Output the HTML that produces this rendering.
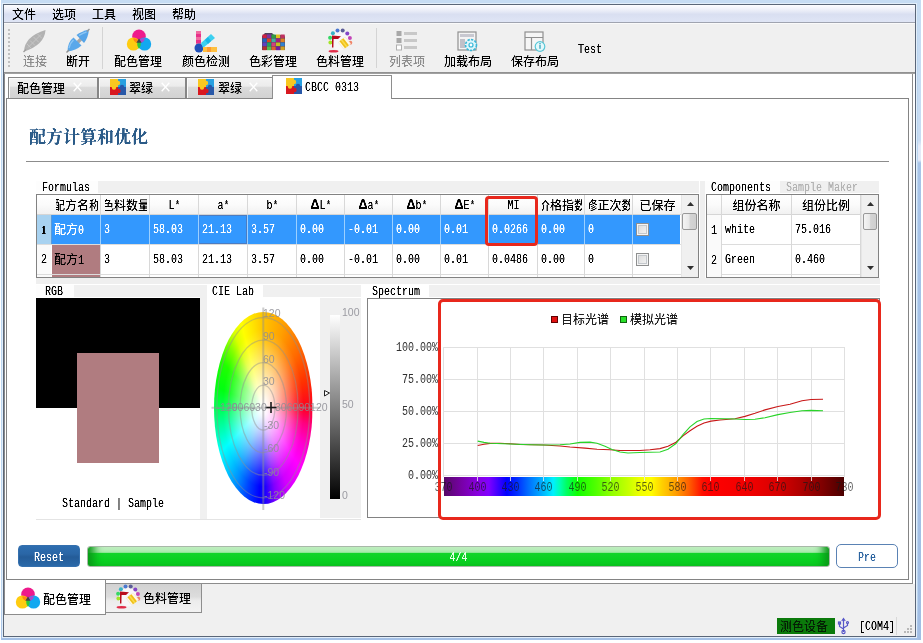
<!DOCTYPE html>
<html lang="zh-CN"><head><meta charset="utf-8"><title>配方计算和优化</title>
<style>
*{box-sizing:border-box;margin:0;padding:0}
html,body{width:923px;height:643px;overflow:hidden}
body{position:relative;background:#fff;font-family:"Liberation Sans","Noto Sans CJK SC",sans-serif;font-size:12px;line-height:12px;color:#000}
.a{position:absolute}
.t{position:absolute;white-space:nowrap;line-height:14px;height:14px;margin-top:1px;filter:url(#cr)}
.m{font-family:"Liberation Mono","Noto Sans CJK SC",monospace;transform:scaleX(.8333);transform-origin:0 50%}
.m.c{transform-origin:50% 50%}
span.m{display:inline-block;margin-right:-1.2px}
.c{text-align:center}
.r{text-align:right}
</style></head>
<body>
<svg width="0" height="0" style="position:absolute"><defs><filter id="cr" x="0" y="0" width="100%" height="100%" color-interpolation-filters="sRGB"><feComponentTransfer><feFuncA type="linear" slope="2" intercept="-0.3"/></feComponentTransfer></filter></defs></svg>
<div id="w" class="a" style="left:0;top:0;width:923px;height:643px;will-change:transform">
<div class="a" style="left:1px;top:0px;width:920px;height:640px;background:linear-gradient(#c6dcf3 0,#c8dcf3 140px,#e4eaf8 146px,#e4eaf8 160px,#a8c4e8 163px,#a2bee4 100%)"></div>
<div class="a" style="left:1px;top:0px;width:917px;height:640px;background:linear-gradient(#c6dcf3 0,#bcd6f0 60px,#bcd6f0 600px,#a4c0e6 100%)"></div>
<div class="a" style="left:1px;top:0px;width:916px;height:4px;background:#c6dcf3"></div>
<div class="a" style="left:2px;top:3px;width:915px;height:635px;background:#e2eefa"></div>
<div class="a" style="left:3px;top:4px;width:913px;height:633px;background:#fff;border:1px solid #5a6678"></div>
<div class="a" style="left:4px;top:5px;width:911px;height:17px;background:linear-gradient(#fdfdff 0%,#e9ecf7 35%,#d9dff1 55%,#dfe5f5 100%)"></div>
<div class="a" style="left:4px;top:22px;width:911px;height:1px;background:#a0a4b0"></div>
<div class="t" style="left:12px;top:7px;">文件</div>
<div class="t" style="left:52px;top:7px;">选项</div>
<div class="t" style="left:92px;top:7px;">工具</div>
<div class="t" style="left:132px;top:7px;">视图</div>
<div class="t" style="left:172px;top:7px;">帮助</div>
<div class="a" style="left:4px;top:23px;width:911px;height:49px;background:#f0f0f0;border-top:1px solid #fafafa"></div>
<div class="a" style="left:4px;top:72px;width:911px;height:2px;background:linear-gradient(#8a8a8a,#a8a8a8)"></div>
<div class="a" style="left:8px;top:27px;width:2px;height:42px;background:repeating-linear-gradient(#f0f0f0 0 2px,#c0c0c0 2px 4px)"></div>
<svg class="a" style="left:22px;top:28px" width="26" height="26" viewBox="0 0 26 26"><path d="M2 23.5 Q2.5 8.5 23.5 2 Q22.5 17 2 23.5Z" fill="#b2b2b2"/><path d="M6 19.5 L19 6.5 M5 16 L9 20 M8 12.5 L13 17.5 M11.5 9 L17 14.5 M15.5 6 L20 10.5" stroke="#c6c6c6" stroke-width="1" fill="none"/><path d="M1.5 24 L4 21.5" stroke="#a0a0a0" stroke-width="1.5"/></svg>
<svg class="a" style="left:65px;top:28px" width="26" height="26" viewBox="0 0 26 26"><path d="M8.5 18.5 L18 9" stroke="#a8a8a8" stroke-width="3.2"/><path d="M2.5 23.5 Q2.5 14 8.5 9.5 L16.5 17.5 Q11 22.5 2.5 23.5Z" fill="#5aa8ea"/><path d="M11.5 7 Q16 3.5 24 1.5 Q23 10.5 19 15 Z" fill="#55a4e8"/><path d="M4 20 Q5 15 8.5 12 M14 7.5 Q18 5 21.5 4" stroke="#8cc6f4" stroke-width="1.4" fill="none"/><path d="M1.5 24.5 L4 22" stroke="#909090" stroke-width="1.5"/><path d="M22 3.5 L24.5 1" stroke="#9a9a9a" stroke-width="1.5"/></svg>
<svg class="a" style="left:126px;top:29px" width="26" height="22" viewBox="0 0 26 22"><circle cx="13" cy="7.2" r="6.8" fill="#ee1a8c"/><circle cx="7.4" cy="15" r="6.6" fill="#ffcc10"/><circle cx="18.6" cy="15" r="6.6" fill="#12a8f0"/><path d="M13 11.6 A6.6 6.6 0 0 1 14 15 A6.6 6.6 0 0 1 13 18.4 A6.6 6.6 0 0 1 12 15 A6.6 6.6 0 0 1 13 11.6Z" fill="#2cc83c" stroke="#2cc83c" stroke-width="1.6"/><path d="M7 9.5 Q10 8.5 12.6 11 Q11 12.5 10.6 14 Q7.5 12.5 7 9.5Z" fill="#ff8a10"/><path d="M19 9.5 Q16 8.5 13.4 11 Q15 12.5 15.4 14 Q18.5 12.5 19 9.5Z" fill="#a84ad0"/><path d="M13 9.6 L15.6 13.8 L10.4 13.8Z" fill="#444"/></svg>
<svg class="a" style="left:194px;top:30px" width="24" height="23" viewBox="0 0 24 23"><rect x="2" y="1" width="5" height="16" fill="#f06aa0"/><rect x="2" y="4" width="5" height="3" fill="#e8308a"/><rect x="2" y="10" width="5" height="3" fill="#e8308a"/><circle cx="5" cy="18" r="4.5" fill="#2050b8"/><path d="M7 13 L17 4 L21 8 L9 18Z" fill="#3cd0f0"/><path d="M11 10 L14 7 L17 11 L14 14Z" fill="#18b8e8"/><rect x="9" y="17" width="14" height="5" fill="#ffc040"/><rect x="13" y="17" width="4" height="5" fill="#ff9a30"/></svg>
<svg class="a" style="left:261px;top:31px" width="25" height="21" viewBox="0 0 25 21"><path d="M1 5 L4 2 L11 2 L13 4 L23 4 L24 6 L24 19 L1 19Z" fill="#504060"/><rect x="1.5" y="3.5" width="4.2" height="3.7" fill="#d02040"/><rect x="6.0" y="3.5" width="4.2" height="3.7" fill="#8030a0"/><rect x="10.5" y="3.5" width="4.2" height="3.7" fill="#30a040"/><rect x="15.0" y="3.5" width="4.2" height="3.7" fill="#e0c020"/><rect x="19.5" y="3.5" width="4.2" height="3.7" fill="#c03060"/><rect x="1.5" y="7.5" width="4.2" height="3.7" fill="#2060c0"/><rect x="6.0" y="7.5" width="4.2" height="3.7" fill="#e04020"/><rect x="10.5" y="7.5" width="4.2" height="3.7" fill="#40b0a0"/><rect x="15.0" y="7.5" width="4.2" height="3.7" fill="#a02080"/><rect x="19.5" y="7.5" width="4.2" height="3.7" fill="#e08020"/><rect x="1.5" y="11.5" width="4.2" height="3.7" fill="#6040c0"/><rect x="6.0" y="11.5" width="4.2" height="3.7" fill="#20a060"/><rect x="10.5" y="11.5" width="4.2" height="3.7" fill="#d04080"/><rect x="15.0" y="11.5" width="4.2" height="3.7" fill="#c0c020"/><rect x="19.5" y="11.5" width="4.2" height="3.7" fill="#3080d0"/><rect x="1.5" y="15.5" width="4.2" height="3.7" fill="#b03030"/><rect x="6.0" y="15.5" width="4.2" height="3.7" fill="#50c050"/><rect x="10.5" y="15.5" width="4.2" height="3.7" fill="#e06030"/><rect x="15.0" y="15.5" width="4.2" height="3.7" fill="#7020a0"/><rect x="19.5" y="15.5" width="4.2" height="3.7" fill="#d0a020"/></svg>
<svg class="a" style="left:327px;top:28px" width="26" height="26" viewBox="0 0 26 26"><circle cx="13" cy="13" r="9.5" fill="#f8f6f8"/><circle cx="5.9" cy="5.2" r="2" fill="#38b4c4"/><circle cx="10.5" cy="2.4" r="2" fill="#4c78d0"/><circle cx="15.7" cy="2.6" r="2" fill="#5c5c98"/><circle cx="20.3" cy="5.5" r="2" fill="#8444c8"/><circle cx="22.9" cy="10" r="2" fill="#c444b8"/><circle cx="23.3" cy="14.8" r="2" fill="#f08468"/><circle cx="3.1" cy="9.7" r="2" fill="#34d864"/><circle cx="3.4" cy="14.4" r="2" fill="#a4e428"/><path d="M5 7.6 L14 8.2 L11 11 L6.6 11 L6.4 19.5 L5 19.5Z" fill="#b80c1c"/><g transform="rotate(-38 17.4 15)"><rect x="13" y="10.6" width="8.8" height="9" rx="1" fill="#fff8e4" stroke="#f0e8d8" stroke-width="0.8"/><rect x="14.6" y="10.6" width="5" height="9" fill="#f0c018"/><rect x="16.2" y="10.6" width="1.6" height="9" fill="#f8dc50"/></g><ellipse cx="6.5" cy="23.3" rx="5" ry="1.3" fill="#e02c48"/></svg>
<svg class="a" style="left:396px;top:30px" width="22" height="21" viewBox="0 0 22 21"><rect x="0.5" y="1" width="5" height="5" fill="#a8a8a8"/><rect x="0.5" y="8" width="5" height="5" fill="#a8a8a8"/><rect x="0.5" y="15" width="5" height="5" fill="#fff" stroke="#b0b0b0"/><rect x="8" y="2" width="13" height="3" fill="#c8c8c8"/><rect x="8" y="9" width="13" height="3" fill="#c8c8c8"/><rect x="8" y="16" width="13" height="3" fill="#c8c8c8"/></svg>
<svg class="a" style="left:457px;top:31px" width="22" height="21" viewBox="0 0 22 21"><rect x="1" y="1" width="18" height="18" fill="#f4f4f4" stroke="#909090" stroke-width="1.2"/><rect x="3" y="3" width="14" height="3" fill="#c8c8d0"/><rect x="3" y="8" width="5" height="9" fill="#c0c0c8"/><circle cx="14" cy="14" r="5.5" fill="#dff6fb" stroke="#38b8d8" stroke-width="1.6" stroke-dasharray="2.4 1.2"/><circle cx="14" cy="14" r="2" fill="#fff" stroke="#38b8d8" stroke-width="1.2"/></svg>
<svg class="a" style="left:524px;top:31px" width="22" height="21" viewBox="0 0 22 21"><rect x="1" y="1" width="18" height="18" fill="#f6f6f6" stroke="#909090" stroke-width="1.2"/><path d="M1 6.5 H19 M7.5 6.5 V19" stroke="#909090" stroke-width="1.2" fill="none"/><circle cx="16" cy="15.5" r="4.8" fill="#e4f8fb" stroke="#58c8d8" stroke-width="1.2"/><rect x="15.3" y="13.8" width="1.4" height="4" fill="#40a8c0"/><rect x="15.3" y="12" width="1.4" height="1.2" fill="#40a8c0"/></svg>
<div class="t" style="left:23px;top:54px;color:#8c8c8c">连接</div>
<div class="t" style="left:66px;top:54px;color:#000">断开</div>
<div class="t" style="left:114px;top:54px;color:#000">配色管理</div>
<div class="t" style="left:182px;top:54px;color:#000">颜色检测</div>
<div class="t" style="left:249px;top:54px;color:#000">色彩管理</div>
<div class="t" style="left:316px;top:54px;color:#000">色料管理</div>
<div class="t" style="left:389px;top:54px;color:#8c8c8c">列表项</div>
<div class="t" style="left:444px;top:54px;color:#000">加载布局</div>
<div class="t" style="left:511px;top:54px;color:#000">保存布局</div>
<div class="t m" style="left:578px;top:42px;">Test</div>
<div class="a" style="left:102px;top:27px;width:1px;height:42px;background:#d4d4d4"></div>
<div class="a" style="left:376px;top:28px;width:1px;height:40px;background:#d4d4d4"></div>
<div class="a" style="left:4px;top:74px;width:909px;height:510px;border:1px solid #8c8c8c;border-top:none;background:#fff"></div>
<div class="a" style="left:6px;top:98px;width:903px;height:482px;border:1px solid #848484;background:#fff"></div>
<div class="a" style="left:8px;top:77px;width:90px;height:22px;border:1px solid #868686;background:linear-gradient(#f3f3f3 0%,#ececec 40%,#dadada 48%,#d2d2d2 100%);box-shadow:inset 1px 1px 0 #fafafa"></div>
<div class="t" style="left:17px;top:81px;">配色管理</div>
<svg class="a" style="left:73px;top:82px" width="9" height="10" viewBox="0 0 9 10"><path d="M0.7 0.7 L8.3 9.3 M8.3 0.7 L0.7 9.3" stroke="#fff" stroke-width="1.3" fill="none"/></svg>
<div class="a" style="left:98px;top:77px;width:88px;height:22px;border:1px solid #868686;background:linear-gradient(#f3f3f3 0%,#ececec 40%,#dadada 48%,#d2d2d2 100%);box-shadow:inset 1px 1px 0 #fafafa"></div>
<svg class="a" style="left:110px;top:79px" width="16" height="16" viewBox="0 0 16 16"><rect x="0" y="0" width="8" height="8" fill="#f8c820"/><rect x="8" y="0" width="8" height="8" fill="#28a0e0"/><rect x="0" y="8" width="8" height="8" fill="#d81820"/><rect x="8" y="8" width="8" height="8" fill="#2858a8"/><circle cx="8" cy="4" r="2.2" fill="#f8c820"/><circle cx="4" cy="8.5" r="2.2" fill="#f8c820"/><circle cx="12" cy="8" r="2.2" fill="#2858a8"/><circle cx="8.5" cy="12" r="2.2" fill="#d81820"/></svg>
<div class="t" style="left:129px;top:81px;">翠绿</div>
<svg class="a" style="left:161px;top:82px" width="9" height="10" viewBox="0 0 9 10"><path d="M0.7 0.7 L8.3 9.3 M8.3 0.7 L0.7 9.3" stroke="#fff" stroke-width="1.3" fill="none"/></svg>
<div class="a" style="left:186px;top:77px;width:87px;height:22px;border:1px solid #868686;background:linear-gradient(#f3f3f3 0%,#ececec 40%,#dadada 48%,#d2d2d2 100%);box-shadow:inset 1px 1px 0 #fafafa"></div>
<svg class="a" style="left:198px;top:79px" width="16" height="16" viewBox="0 0 16 16"><rect x="0" y="0" width="8" height="8" fill="#f8c820"/><rect x="8" y="0" width="8" height="8" fill="#28a0e0"/><rect x="0" y="8" width="8" height="8" fill="#d81820"/><rect x="8" y="8" width="8" height="8" fill="#2858a8"/><circle cx="8" cy="4" r="2.2" fill="#f8c820"/><circle cx="4" cy="8.5" r="2.2" fill="#f8c820"/><circle cx="12" cy="8" r="2.2" fill="#2858a8"/><circle cx="8.5" cy="12" r="2.2" fill="#d81820"/></svg>
<div class="t" style="left:218px;top:81px;">翠绿</div>
<svg class="a" style="left:249px;top:82px" width="9" height="10" viewBox="0 0 9 10"><path d="M0.7 0.7 L8.3 9.3 M8.3 0.7 L0.7 9.3" stroke="#fff" stroke-width="1.3" fill="none"/></svg>
<div class="a" style="left:272px;top:75px;width:120px;height:24px;border:1px solid #8e8e8e;border-bottom:none;background:#fff"></div>
<svg class="a" style="left:286px;top:78px" width="16" height="16" viewBox="0 0 16 16"><rect x="0" y="0" width="8" height="8" fill="#f8c820"/><rect x="8" y="0" width="8" height="8" fill="#28a0e0"/><rect x="0" y="8" width="8" height="8" fill="#d81820"/><rect x="8" y="8" width="8" height="8" fill="#2858a8"/><circle cx="8" cy="4" r="2.2" fill="#f8c820"/><circle cx="4" cy="8.5" r="2.2" fill="#f8c820"/><circle cx="12" cy="8" r="2.2" fill="#2858a8"/><circle cx="8.5" cy="12" r="2.2" fill="#d81820"/></svg>
<div class="t m" style="left:305px;top:80px;">CBCC 0313</div>
<div class="t" style="left:29px;top:126px;font-family:&quot;Liberation Serif&quot;,&quot;Noto Serif CJK SC&quot;,serif;font-weight:bold;font-size:17px;line-height:22px;height:22px;color:#2b5b88">配方计算和优化</div>
<div class="a" style="left:26px;top:161px;width:863px;height:1px;background:#8c8c8c"></div>
<div class="a" style="left:36px;top:181px;width:663px;height:12px;background:#f0f0f0"></div>
<div class="a" style="left:700px;top:181px;width:5px;height:97px;background:#efefef"></div>
<div class="a" style="left:36px;top:278px;width:844px;height:6px;background:#efefef"></div>
<div class="a" style="left:36px;top:181px;width:62px;height:12px;background:#fdfdfd"></div>
<div class="t m" style="left:42px;top:180px;">Formulas</div>
<div class="a" style="left:36px;top:194px;width:663px;height:84px;border:1px solid #828282;background:#fff;overflow:hidden"></div>
<div class="a" style="left:37px;top:195px;width:644px;height:19px;background:linear-gradient(#ffffff 0%,#fbfbfb 50%,#f1f1f1 100%)"></div>
<div class="a" style="left:37px;top:214px;width:644px;height:1px;background:#d5d5d5"></div>
<div class="a" style="left:37px;top:215px;width:643px;height:29px;background:#3398fe"></div>
<div class="a" style="left:37px;top:215px;width:14px;height:29px;background:#a8d2f0"></div>
<div class="a" style="left:51px;top:215px;width:1px;height:29px;background:#3c78b8"></div>
<div class="a" style="left:37px;top:244px;width:644px;height:1px;background:#dcdcdc"></div>
<div class="a" style="left:37px;top:274px;width:644px;height:1px;background:#dcdcdc"></div>
<div class="a" style="left:37px;top:245px;width:14px;height:29px;background:#fafafa"></div>
<div class="a" style="left:37px;top:275px;width:14px;height:2px;background:#fafafa"></div>
<div class="a" style="left:52px;top:245px;width:48px;height:29px;background:#b07c80"></div>
<div class="a" style="left:52px;top:275px;width:48px;height:2px;background:#b07c80"></div>
<div class="a" style="left:100px;top:195px;width:1px;height:82px;background:#d8d8d8"></div>
<div class="a" style="left:100px;top:215px;width:1px;height:29px;background:#9cd0ff"></div>
<div class="a" style="left:149px;top:195px;width:1px;height:82px;background:#d8d8d8"></div>
<div class="a" style="left:149px;top:215px;width:1px;height:29px;background:#9cd0ff"></div>
<div class="a" style="left:198px;top:195px;width:1px;height:82px;background:#d8d8d8"></div>
<div class="a" style="left:198px;top:215px;width:1px;height:29px;background:#9cd0ff"></div>
<div class="a" style="left:247px;top:195px;width:1px;height:82px;background:#d8d8d8"></div>
<div class="a" style="left:247px;top:215px;width:1px;height:29px;background:#9cd0ff"></div>
<div class="a" style="left:296px;top:195px;width:1px;height:82px;background:#d8d8d8"></div>
<div class="a" style="left:296px;top:215px;width:1px;height:29px;background:#9cd0ff"></div>
<div class="a" style="left:344px;top:195px;width:1px;height:82px;background:#d8d8d8"></div>
<div class="a" style="left:344px;top:215px;width:1px;height:29px;background:#9cd0ff"></div>
<div class="a" style="left:392px;top:195px;width:1px;height:82px;background:#d8d8d8"></div>
<div class="a" style="left:392px;top:215px;width:1px;height:29px;background:#9cd0ff"></div>
<div class="a" style="left:440px;top:195px;width:1px;height:82px;background:#d8d8d8"></div>
<div class="a" style="left:440px;top:215px;width:1px;height:29px;background:#9cd0ff"></div>
<div class="a" style="left:488px;top:195px;width:1px;height:82px;background:#d8d8d8"></div>
<div class="a" style="left:488px;top:215px;width:1px;height:29px;background:#9cd0ff"></div>
<div class="a" style="left:537px;top:195px;width:1px;height:82px;background:#d8d8d8"></div>
<div class="a" style="left:537px;top:215px;width:1px;height:29px;background:#9cd0ff"></div>
<div class="a" style="left:584px;top:195px;width:1px;height:82px;background:#d8d8d8"></div>
<div class="a" style="left:584px;top:215px;width:1px;height:29px;background:#9cd0ff"></div>
<div class="a" style="left:632px;top:195px;width:1px;height:82px;background:#d8d8d8"></div>
<div class="a" style="left:632px;top:215px;width:1px;height:29px;background:#9cd0ff"></div>
<div class="a" style="left:51px;top:215px;width:1px;height:29px;background:#5a9ad8"></div>
<div class="a" style="left:199px;top:215px;width:48px;height:29px;border:1px solid #4b7cc2;border-left-color:#3b8cee"></div>
<div class="a" style="left:56px;top:195px;width:42px;height:19px;overflow:hidden"><div class="t" style="left:50%;top:3px;transform:translateX(-50%)">配方名称</div></div>
<div class="a" style="left:105px;top:195px;width:42px;height:19px;overflow:hidden"><div class="t" style="left:50%;top:3px;transform:translateX(-50%)">色料数量</div></div>
<div class="t m c" style="left:150px;top:198px;width:49px">L*</div>
<div class="t m c" style="left:199px;top:198px;width:49px">a*</div>
<div class="t m c" style="left:248px;top:198px;width:49px">b*</div>
<div class="t m c" style="left:297px;top:198px;width:48px"><b style="font-family:&quot;Liberation Sans&quot;,sans-serif;font-size:15px;line-height:0">Δ</b>L*</div>
<div class="t m c" style="left:345px;top:198px;width:48px"><b style="font-family:&quot;Liberation Sans&quot;,sans-serif;font-size:15px;line-height:0">Δ</b>a*</div>
<div class="t m c" style="left:393px;top:198px;width:48px"><b style="font-family:&quot;Liberation Sans&quot;,sans-serif;font-size:15px;line-height:0">Δ</b>b*</div>
<div class="t m c" style="left:441px;top:198px;width:48px"><b style="font-family:&quot;Liberation Sans&quot;,sans-serif;font-size:15px;line-height:0">Δ</b>E*</div>
<div class="t m c" style="left:489px;top:198px;width:49px">MI</div>
<div class="a" style="left:542px;top:195px;width:40px;height:19px;overflow:hidden"><div class="t" style="left:50%;top:3px;transform:translateX(-50%)">价格指数</div></div>
<div class="a" style="left:589px;top:195px;width:41px;height:19px;overflow:hidden"><div class="t" style="left:50%;top:3px;transform:translateX(-50%)">修正次数</div></div>
<div class="a" style="left:637px;top:195px;width:41px;height:19px;overflow:hidden"><div class="t" style="left:50%;top:3px;transform:translateX(-50%)">已保存</div></div>
<div class="t m" style="left:41px;top:222px;color:#000;font-weight:bold;font-family:&quot;Liberation Serif&quot;,serif;font-size:13px">1</div>
<div class="t" style="left:54px;top:222px;color:#fff">配方<span class="m">0</span></div>
<div class="t m" style="left:104px;top:222px;color:#fff">3</div>
<div class="t m" style="left:153px;top:222px;color:#fff">58.03</div>
<div class="t m" style="left:202px;top:222px;color:#fff">21.13</div>
<div class="t m" style="left:251px;top:222px;color:#fff">3.57</div>
<div class="t m" style="left:300px;top:222px;color:#fff">0.00</div>
<div class="t m" style="left:348px;top:222px;color:#fff">-0.01</div>
<div class="t m" style="left:396px;top:222px;color:#fff">0.00</div>
<div class="t m" style="left:444px;top:222px;color:#fff">0.01</div>
<div class="t m" style="left:492px;top:222px;color:#fff">0.0266</div>
<div class="t m" style="left:541px;top:222px;color:#fff">0.00</div>
<div class="t m" style="left:588px;top:222px;color:#fff">0</div>
<div class="a" style="left:636px;top:223px;width:13px;height:13px;border:1px solid #8e8f8f;background:linear-gradient(135deg,#d8d8d8,#f6f6f6);box-shadow:inset 0 0 0 1px #f4f4f4, inset 0 0 0 2px #c4c8cc"></div>
<div class="t m" style="left:41px;top:252px;color:#000;">2</div>
<div class="t" style="left:54px;top:252px;color:#000">配方<span class="m">1</span></div>
<div class="t m" style="left:104px;top:252px;color:#000">3</div>
<div class="t m" style="left:153px;top:252px;color:#000">58.03</div>
<div class="t m" style="left:202px;top:252px;color:#000">21.13</div>
<div class="t m" style="left:251px;top:252px;color:#000">3.57</div>
<div class="t m" style="left:300px;top:252px;color:#000">0.00</div>
<div class="t m" style="left:348px;top:252px;color:#000">-0.01</div>
<div class="t m" style="left:396px;top:252px;color:#000">0.00</div>
<div class="t m" style="left:444px;top:252px;color:#000">0.01</div>
<div class="t m" style="left:492px;top:252px;color:#000">0.0486</div>
<div class="t m" style="left:541px;top:252px;color:#000">0.00</div>
<div class="t m" style="left:588px;top:252px;color:#000">0</div>
<div class="a" style="left:636px;top:253px;width:13px;height:13px;border:1px solid #8e8f8f;background:linear-gradient(135deg,#d8d8d8,#f6f6f6);box-shadow:inset 0 0 0 1px #f4f4f4, inset 0 0 0 2px #c4c8cc"></div>
<div class="a" style="left:681px;top:195px;width:17px;height:82px;background:#f0f0f0;border-left:1px solid #e6e6e6"></div>
<svg class="a" style="left:687px;top:202px" width="7" height="4" viewBox="0 0 7 4"><path d="M0 4 L3.5 0 L7 4Z" fill="#303030"/></svg>
<svg class="a" style="left:687px;top:266px" width="7" height="4" viewBox="0 0 7 4"><path d="M0 0 L3.5 4 L7 0Z" fill="#303030"/></svg>
<div class="a" style="left:682px;top:213px;width:15px;height:17px;border:1px solid #989898;border-radius:2px;background:linear-gradient(90deg,#f4f4f4 0%,#e8e8e8 45%,#d4d4d4 55%,#cfcfcf 100%)"></div>
<div class="a" style="left:705px;top:181px;width:174px;height:12px;background:#f0f0f0"></div>
<div class="a" style="left:705px;top:181px;width:75px;height:12px;background:#fdfdfd"></div>
<div class="t m" style="left:711px;top:180px;">Components</div>
<div class="t m" style="left:786px;top:180px;color:#b4b4b4">Sample Maker</div>
<div class="a" style="left:706px;top:194px;width:173px;height:84px;border:1px solid #828282;background:#fff;overflow:hidden"></div>
<div class="a" style="left:707px;top:195px;width:154px;height:19px;background:linear-gradient(#ffffff 0%,#fbfbfb 50%,#f1f1f1 100%)"></div>
<div class="a" style="left:707px;top:214px;width:154px;height:1px;background:#d5d5d5"></div>
<div class="a" style="left:707px;top:244px;width:154px;height:1px;background:#dcdcdc"></div>
<div class="a" style="left:707px;top:274px;width:154px;height:1px;background:#dcdcdc"></div>
<div class="a" style="left:707px;top:215px;width:14px;height:62px;background:#fafafa"></div>
<div class="a" style="left:721px;top:195px;width:1px;height:82px;background:#d8d8d8"></div>
<div class="a" style="left:791px;top:195px;width:1px;height:82px;background:#d8d8d8"></div>
<div class="a" style="left:860px;top:195px;width:1px;height:82px;background:#d8d8d8"></div>
<div class="t c" style="left:722px;top:198px;width:69px;">组份名称</div>
<div class="t c" style="left:792px;top:198px;width:68px;">组份比例</div>
<div class="t m" style="left:711px;top:223px;">1</div>
<div class="t m" style="left:711px;top:253px;">2</div>
<div class="t m" style="left:725px;top:222px;">white</div>
<div class="t m" style="left:725px;top:252px;">Green</div>
<div class="t m" style="left:795px;top:222px;">75.016</div>
<div class="t m" style="left:795px;top:252px;">0.460</div>
<div class="a" style="left:861px;top:195px;width:17px;height:82px;background:#f0f0f0;border-left:1px solid #e6e6e6"></div>
<svg class="a" style="left:867px;top:202px" width="7" height="4" viewBox="0 0 7 4"><path d="M0 4 L3.5 0 L7 4Z" fill="#303030"/></svg>
<svg class="a" style="left:867px;top:266px" width="7" height="4" viewBox="0 0 7 4"><path d="M0 0 L3.5 4 L7 0Z" fill="#303030"/></svg>
<div class="a" style="left:863px;top:213px;width:14px;height:17px;border:1px solid #989898;border-radius:2px;background:linear-gradient(90deg,#f4f4f4 0%,#e8e8e8 45%,#d4d4d4 55%,#cfcfcf 100%)"></div>
<div class="a" style="left:36px;top:285px;width:164px;height:12px;background:#f0f0f0"></div>
<div class="a" style="left:36px;top:285px;width:38px;height:12px;background:#fdfdfd"></div>
<div class="t m" style="left:45px;top:284px;">RGB</div>
<div class="a" style="left:36px;top:298px;width:164px;height:110px;background:#000"></div>
<div class="a" style="left:77px;top:353px;width:82px;height:110px;background:#b07c80"></div>
<div class="t m" style="left:62px;top:496px;">Standard | Sample</div>
<div class="a" style="left:200px;top:285px;width:7px;height:234px;background:#f0f0f0"></div>
<div class="a" style="left:36px;top:519px;width:325px;height:1px;background:#e4e4e4"></div>
<div class="a" style="left:263px;top:285px;width:98px;height:12px;background:#f0f0f0"></div>
<div class="t m" style="left:212px;top:284px;">CIE Lab</div>
<div class="a" style="left:320px;top:298px;width:41px;height:220px;background:#f0f0f0"></div>
<div class="a" style="left:214px;top:311.7px;width:192px;height:192px;border-radius:50%;transform-origin:0 0;transform:scaleX(0.5135);background:radial-gradient(closest-side,rgba(255,255,255,1) 0%,rgba(255,255,255,.96) 8%,rgba(255,255,255,.78) 23%,rgba(255,255,255,.44) 47%,rgba(255,255,255,.1) 70%,rgba(255,255,255,0) 82%),conic-gradient(from 0deg at 50% 50%,#ffc400 0deg,#ffa000 25deg,#ff6a00 50deg,#ff3000 72deg,#ff0020 90deg,#ff0080 101deg,#ff00d0 115deg,#ff00ff 130deg,#d000ff 150deg,#8000ff 165deg,#2000ff 177deg,#0000ff 185deg,#0040ff 200deg,#0090ff 215deg,#00d0ff 230deg,#00ffff 242deg,#00ffb0 255deg,#00ff60 268deg,#00ff10 283deg,#20ff00 300deg,#80ff00 313deg,#d8ff00 323deg,#ffff00 333deg,#ffe000 348deg,#ffc400 360deg)"></div>
<svg class="a" style="left:207px;top:298px" width="154" height="221" viewBox="207 298 154 221"><defs><linearGradient id="lg" x1="0" y1="0" x2="0" y2="1"><stop offset="0" stop-color="#fff"/><stop offset="1" stop-color="#000"/></linearGradient></defs><g fill="none" stroke="#909090" stroke-opacity="0.45" stroke-width="1.3"><ellipse cx="263.3" cy="407.7" rx="11.6" ry="22.5"/><ellipse cx="263.3" cy="407.7" rx="23.2" ry="45"/><ellipse cx="263.3" cy="407.7" rx="34.8" ry="67.5"/><ellipse cx="263.3" cy="407.7" rx="46.4" ry="90.2"/><path d="M263.3 307.5 V510 M211.5 407.7 H320" stroke-width="2"/></g><rect x="330" y="315" width="10" height="184" fill="url(#lg)"/><path d="M324.5 390.5 L329.5 393 L324.5 396Z" fill="#fff" stroke="#222" stroke-width="1"/><path d="M265.5 407.5 H276.5 M271 402 V413" stroke="#1a1a1a" stroke-width="1.6"/><g font-family="Liberation Sans, sans-serif" font-size="10.5" fill="#8c8c94" fill-opacity="0.85"><text x="263" y="316.5">120</text><text x="263" y="339.5">90</text><text x="263" y="362.5">60</text><text x="263" y="385">30</text><text x="264" y="429">-30</text><text x="264" y="452">-60</text><text x="264" y="476">-90</text><text x="264" y="499">-120</text><text x="216.5" y="411">-120</text><text x="228.2" y="411">-90</text><text x="239.9" y="411">-60</text><text x="251.6" y="411">-30</text><text x="275" y="411">30</text><text x="286.7" y="411">60</text><text x="298.4" y="411">90</text><text x="310.1" y="411">120</text><text x="342" y="316">100</text><text x="342" y="407.5">50</text><text x="342" y="499">0</text></g></svg>
<div class="a" style="left:361px;top:285px;width:6px;height:234px;background:#fff"></div>
<div class="a" style="left:429px;top:285px;width:451px;height:12px;background:#f0f0f0"></div>
<div class="t m" style="left:372px;top:284px;">Spectrum</div>
<div class="a" style="left:367px;top:298px;width:513px;height:220px;border:1px solid #828282;background:#fff"></div>
<svg class="a" style="left:367px;top:298px" width="513" height="220" viewBox="0 0 513 220"><defs><linearGradient id="sp" x1="0" y1="0" x2="1" y2="0"><stop offset="0" stop-color="#560a66"/><stop offset="0.045" stop-color="#7800a8"/><stop offset="0.085" stop-color="#8800e0"/><stop offset="0.112" stop-color="#8000ff"/><stop offset="0.134" stop-color="#4000ff"/><stop offset="0.157" stop-color="#0000ff"/><stop offset="0.184" stop-color="#0030ff"/><stop offset="0.212" stop-color="#0070ff"/><stop offset="0.245" stop-color="#00b0ff"/><stop offset="0.273" stop-color="#00f0ff"/><stop offset="0.29" stop-color="#00ffb0"/><stop offset="0.307" stop-color="#00ff60"/><stop offset="0.334" stop-color="#10ff00"/><stop offset="0.379" stop-color="#50ff00"/><stop offset="0.418" stop-color="#90ff00"/><stop offset="0.462" stop-color="#c8ff00"/><stop offset="0.49" stop-color="#f0ff00"/><stop offset="0.5175" stop-color="#ffff00"/><stop offset="0.545" stop-color="#ffd000"/><stop offset="0.579" stop-color="#ffa000"/><stop offset="0.612" stop-color="#ff6000"/><stop offset="0.645" stop-color="#ff1000"/><stop offset="0.667" stop-color="#ff0000"/><stop offset="0.767" stop-color="#f00000"/><stop offset="0.834" stop-color="#d80000"/><stop offset="0.89" stop-color="#b00000"/><stop offset="0.945" stop-color="#800000"/><stop offset="1" stop-color="#4a0000"/></linearGradient></defs><path d="M76.5 49 V179 M110.5 49 V179 M143.5 49 V179 M176.5 49 V179 M210.5 49 V179 M243.5 49 V179 M277.5 49 V179 M310.5 49 V179 M343.5 49 V179 M377.5 49 V179 M410.5 49 V179 M444.5 49 V179 M477.5 49 V179 M76 177.5 H478 M76 145.5 H478 M76 113.5 H478 M76 81.5 H478 M76 49.5 H478 " stroke="#e0e0e0" stroke-width="1" fill="none"/><rect x="77" y="179" width="400" height="19" fill="url(#sp)"/><path d="M110.5 179 v4 M143.5 179 v4 M176.5 179 v4 M210.5 179 v4 M243.5 179 v4 M277.5 179 v4 M310.5 179 v4 M343.5 179 v4 M377.5 179 v4 M410.5 179 v4 M444.5 179 v4 " stroke="#e8e8e8" stroke-opacity="0.8" stroke-width="1" fill="none"/><polyline points="110.7,147.5 117.0,146.2 123.0,145.4 133.0,145.2 143.0,145.7 153.0,146.5 177.0,147.0 193.0,148.0 203.0,149.0 218.0,150.1 230.0,151.2 243.0,151.7 253.0,152.5 273.0,152.5 283.0,151.7 293.0,150.6 301.0,148.3 309.0,144.2 316.0,137.9 323.0,132.7 330.0,128.3 337.0,124.9 344.0,123.1 353.0,122.0 368.0,120.7 378.0,118.4 388.0,115.3 398.0,111.9 411.0,108.5 423.0,106.2 435.0,102.8 444.0,101.5 456.0,101.2" fill="none" stroke="#c81818" stroke-width="1.1"/><polyline points="110.7,143.1 117.0,144.4 123.0,145.2 143.0,146.0 163.0,146.7 177.0,147.0 193.0,146.7 203.0,146.0 213.0,144.4 223.0,144.1 230.0,145.2 238.0,148.3 245.0,151.4 253.0,154.0 261.0,155.0 273.0,154.5 283.0,154.3 293.0,154.0 301.0,151.3 309.0,145.5 316.0,136.6 323.0,128.8 330.0,123.6 337.0,121.0 344.0,120.5 358.0,120.7 368.0,121.0 378.0,121.5 388.0,121.3 398.0,119.7 411.0,116.6 423.0,114.5 435.0,112.7 444.0,112.4 456.0,112.7" fill="none" stroke="#28d428" stroke-width="1.1"/><g font-family="Liberation Mono, monospace" font-size="12" fill="#303030"><text x="41" y="180.7" textLength="30" lengthAdjust="spacingAndGlyphs">0.00%</text><text x="35" y="148.7" textLength="36" lengthAdjust="spacingAndGlyphs">25.00%</text><text x="35" y="116.7" textLength="36" lengthAdjust="spacingAndGlyphs">50.00%</text><text x="35" y="84.7" textLength="36" lengthAdjust="spacingAndGlyphs">75.00%</text><text x="29" y="52.7" textLength="42" lengthAdjust="spacingAndGlyphs">100.00%</text></g><g font-family="Liberation Mono, monospace" font-size="12" fill="#181818" fill-opacity="0.68"><text x="67.5" y="193" textLength="18" lengthAdjust="spacingAndGlyphs">370</text><text x="101.5" y="193" textLength="18" lengthAdjust="spacingAndGlyphs">400</text><text x="134.5" y="193" textLength="18" lengthAdjust="spacingAndGlyphs">430</text><text x="167.5" y="193" textLength="18" lengthAdjust="spacingAndGlyphs">460</text><text x="201.5" y="193" textLength="18" lengthAdjust="spacingAndGlyphs">490</text><text x="234.5" y="193" textLength="18" lengthAdjust="spacingAndGlyphs">520</text><text x="268.5" y="193" textLength="18" lengthAdjust="spacingAndGlyphs">550</text><text x="301.5" y="193" textLength="18" lengthAdjust="spacingAndGlyphs">580</text><text x="334.5" y="193" textLength="18" lengthAdjust="spacingAndGlyphs">610</text><text x="368.5" y="193" textLength="18" lengthAdjust="spacingAndGlyphs">640</text><text x="401.5" y="193" textLength="18" lengthAdjust="spacingAndGlyphs">670</text><text x="435.5" y="193" textLength="18" lengthAdjust="spacingAndGlyphs">700</text><text x="468.5" y="193" textLength="18" lengthAdjust="spacingAndGlyphs">730</text></g><rect x="184.5" y="18.5" width="6" height="6" fill="#e01010" stroke="#600000" stroke-width="1"/><rect x="253.5" y="18.5" width="6" height="6" fill="#28e028" stroke="#106010" stroke-width="1"/></svg>
<div class="t" style="left:561px;top:312px;color:#202020">目标光谱</div>
<div class="t" style="left:630px;top:312px;color:#202020">模拟光谱</div>
<div class="a" style="left:438px;top:299px;width:443px;height:221px;border:3px solid #e8281c;border-radius:5px"></div>
<div class="a" style="left:485px;top:196px;width:53px;height:50px;border:3px solid #e8281c;border-radius:4px"></div>
<div class="a" style="left:18px;top:545px;width:62px;height:22px;border-radius:4px;background:linear-gradient(#2e6eb0 0%,#2a66a6 40%,#245c98 55%,#2a68a8 100%);border:1px solid #3570ae"></div>
<div class="t m c" style="left:18px;top:550px;width:62px;color:#fff">Reset</div>
<div class="a" style="left:87px;top:546px;width:743px;height:21px;border:1px solid #a8b8a8;border-radius:3px;background:linear-gradient(#c8f0c8 0%,#a4eaa8 28%,#12d42a 34%,#08d020 75%,#0cc420 100%);box-shadow:inset 14px 0 8px -8px #0a9a18, inset -14px 0 8px -8px #0a9a18"></div>
<div class="t m c" style="left:87px;top:550px;width:743px;color:#e8ffe8">4/4</div>
<div class="a" style="left:836px;top:544px;width:62px;height:24px;border:1px solid #5a82b4;border-radius:5px;background:#fff"></div>
<div class="t m c" style="left:836px;top:550px;width:62px;color:#2c64a0">Pre</div>
<div class="a" style="left:4px;top:584px;width:911px;height:52px;background:#f0f0f0"></div>
<div class="a" style="left:4px;top:580px;width:102px;height:35px;background:#fff;border:1px solid #8c8c8c;border-top:none"></div>
<div class="a" style="left:5px;top:580px;width:1px;height:4px;background:#fff"></div>
<div class="a" style="left:105px;top:583px;width:97px;height:30px;border:1px solid #8e8e8e;background:linear-gradient(#d2d2d2 0%,#dcdcdc 45%,#ececec 60%,#f2f2f2 100%)"></div>
<svg class="a" style="left:15px;top:587px" width="26" height="22" viewBox="0 0 26 22"><circle cx="13" cy="7.2" r="6.8" fill="#ee1a8c"/><circle cx="7.4" cy="15" r="6.6" fill="#ffcc10"/><circle cx="18.6" cy="15" r="6.6" fill="#12a8f0"/><path d="M13 11.6 A6.6 6.6 0 0 1 14 15 A6.6 6.6 0 0 1 13 18.4 A6.6 6.6 0 0 1 12 15 A6.6 6.6 0 0 1 13 11.6Z" fill="#2cc83c" stroke="#2cc83c" stroke-width="1.6"/><path d="M7 9.5 Q10 8.5 12.6 11 Q11 12.5 10.6 14 Q7.5 12.5 7 9.5Z" fill="#ff8a10"/><path d="M19 9.5 Q16 8.5 13.4 11 Q15 12.5 15.4 14 Q18.5 12.5 19 9.5Z" fill="#a84ad0"/><path d="M13 9.6 L15.6 13.8 L10.4 13.8Z" fill="#444"/></svg>
<div class="t" style="left:43px;top:592px;">配色管理</div>
<svg class="a" style="left:115px;top:584px" width="26" height="26" viewBox="0 0 26 26"><circle cx="13" cy="13" r="9.5" fill="#f8f6f8"/><circle cx="5.9" cy="5.2" r="2" fill="#38b4c4"/><circle cx="10.5" cy="2.4" r="2" fill="#4c78d0"/><circle cx="15.7" cy="2.6" r="2" fill="#5c5c98"/><circle cx="20.3" cy="5.5" r="2" fill="#8444c8"/><circle cx="22.9" cy="10" r="2" fill="#c444b8"/><circle cx="23.3" cy="14.8" r="2" fill="#f08468"/><circle cx="3.1" cy="9.7" r="2" fill="#34d864"/><circle cx="3.4" cy="14.4" r="2" fill="#a4e428"/><path d="M5 7.6 L14 8.2 L11 11 L6.6 11 L6.4 19.5 L5 19.5Z" fill="#b80c1c"/><g transform="rotate(-38 17.4 15)"><rect x="13" y="10.6" width="8.8" height="9" rx="1" fill="#fff8e4" stroke="#f0e8d8" stroke-width="0.8"/><rect x="14.6" y="10.6" width="5" height="9" fill="#f0c018"/><rect x="16.2" y="10.6" width="1.6" height="9" fill="#f8dc50"/></g><ellipse cx="6.5" cy="23.3" rx="5" ry="1.3" fill="#e02c48"/></svg>
<div class="t" style="left:143px;top:591px;">色料管理</div>
<div class="a" style="left:777px;top:618px;width:58px;height:16px;background:#0b7a0b"></div>
<div class="t" style="left:780px;top:619px;color:#052005">测色设备</div>
<svg class="a" style="left:837px;top:617px" width="13" height="18" viewBox="0 0 13 18"><g fill="none" stroke="#5858c8" stroke-width="1.2"><path d="M6.5 2 V15 M2.5 7 V9.5 L6.5 12 M10.5 6 V8.5 L6.5 11"/><circle cx="6.5" cy="15" r="1.6"/><path d="M4.8 4 L6.5 1.5 L8.2 4"/><rect x="1.5" y="5" width="2" height="2"/><circle cx="10.5" cy="5.5" r="1"/></g></svg>
<div class="t m" style="left:859px;top:619px;">[COM4]</div>
<div class="a" style="left:896px;top:617px;width:1px;height:18px;background:#d8d8d8"></div>
<svg class="a" style="left:904px;top:625px" width="9" height="9" viewBox="0 0 9 9"><g fill="#b8b8b8"><rect x="6" y="0" width="2" height="2"/><rect x="3" y="3" width="2" height="2"/><rect x="6" y="3" width="2" height="2"/><rect x="0" y="6" width="2" height="2"/><rect x="3" y="6" width="2" height="2"/><rect x="6" y="6" width="2" height="2"/></g></svg>
</div>
</body></html>
